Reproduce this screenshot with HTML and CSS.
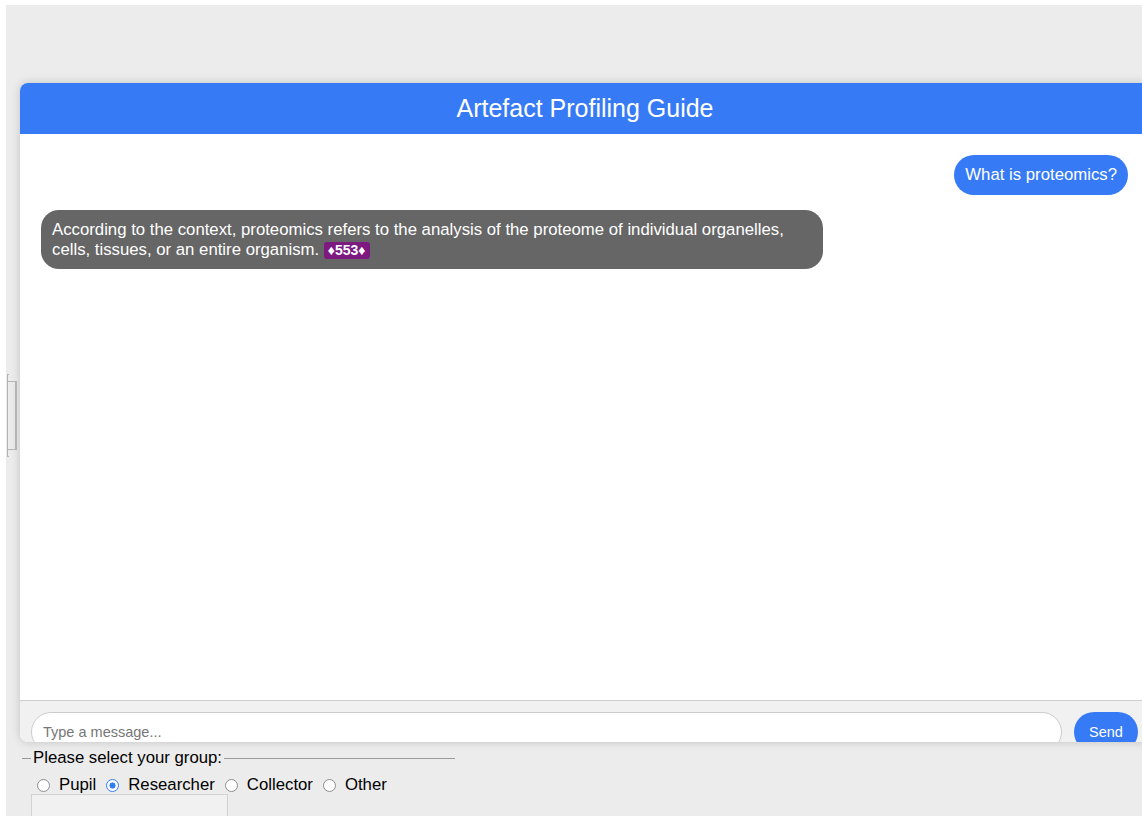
FILE: index.html
```html
<!DOCTYPE html>
<html lang="en">
<head>
<meta charset="utf-8">
<title>Artefact Profiling Guide</title>
<link rel="stylesheet" href="styles.css">
</head>
<body>
<div class="page">
  <div class="side-handle" aria-hidden="true"><span></span></div>

  <section class="chat">
    <header class="chat-header">Artefact Profiling Guide</header>

    <div class="messages">
      <div class="bubble user">What is proteomics?</div>
      <div class="bubble bot">According to the context, proteomics refers to the analysis of the proteome of individual organelles, cells, tissues, or an entire organism. <span class="ref">♦553♦</span></div>
    </div>

    <form class="composer">
      <input class="composer-input" type="text" placeholder="Type a message...">
      <button class="send" type="button">Send</button>
    </form>
  </section>

  <fieldset class="group">
    <legend>Please select your group:</legend>
    <div class="options">
      <label class="opt"><input type="radio" name="group" value="pupil"> Pupil</label>
      <label class="opt"><input type="radio" name="group" value="researcher" checked> Researcher</label>
      <label class="opt"><input type="radio" name="group" value="collector"> Collector</label>
      <label class="opt"><input type="radio" name="group" value="other"> Other</label>
    </div>
    <input class="other-text" type="text">
  </fieldset>
</div>
</body>
</html>
```

FILE: styles.css
```css
html, body {
  margin: 0;
  height: 100%;
  overflow: hidden;
}

body {
  background: #ffffff;
  padding: 5px 0 0 6px;
  box-sizing: border-box;
  font-family: "Liberation Sans", Arial, Helvetica, sans-serif;
  color: #000;
}

.page {
  position: relative;
  background: #ececec;
  height: 811px;
  padding-top: 78px;
  box-sizing: border-box;
  overflow: hidden;
}

/* thin collapsed panel sitting on the left edge */
.side-handle {
  position: absolute;
  left: 1px;
  top: 369px;
  width: 10px;
  height: 83px;
  border-left: 1px solid #b4b4b4;
  box-sizing: border-box;
}
.side-handle::before,
.side-handle::after {
  content: "";
  position: absolute;
  left: -1px;
  width: 2px;
  height: 1px;
  background: #b4b4b4;
}
.side-handle::before { top: 0; }
.side-handle::after { bottom: 0; }
.side-handle span {
  position: absolute;
  left: 0;
  top: 7px;
  width: 9px;
  height: 69px;
  border: 1px solid #b4b4b4;
  border-left: none;
  border-right-width: 2px;
  box-sizing: border-box;
}

/* chat window */
.chat {
  margin-left: 14px;
  width: 1130px;
  height: 659px;
  background: #fff;
  border-radius: 8px;
  overflow: hidden;
  box-shadow: 0 0 10px rgba(0, 0, 0, 0.18);
  display: flex;
  flex-direction: column;
}

.chat-header {
  height: 51px;
  flex: none;
  background: #367bf5;
  color: #fff;
  font-size: 25px;
  line-height: 51px;
  text-align: center;
}

.messages {
  flex: none;
  height: 566px;
  display: flex;
  flex-direction: column;
  gap: 15px;
  padding: 21px 22px 20px 21px;
  box-sizing: border-box;
}

.bubble {
  font-size: 16.75px;
  color: #fff;
  box-sizing: border-box;
}

.bubble.user {
  align-self: flex-end;
  background: #367bf5;
  border-radius: 20px;
  padding: 10px 11px;
  line-height: 20px;
}

.bubble.bot {
  align-self: flex-start;
  width: 782px;
  background: #666666;
  border-radius: 18px;
  padding: 10px 30px 10px 11px;
  line-height: 19.5px;
}

.ref {
  display: inline-block;
  background: #7d1a80;
  color: #fff;
  font-weight: bold;
  font-size: 14px;
  line-height: 17px;
  padding: 0 4px;
  border-radius: 3px;
  vertical-align: 0;
}

/* message composer (taller than the visible strip; the window clips it) */
.composer {
  flex: none;
  margin: 0;
  border-top: 1px solid #cfcfcf;
  background: #f1f1f1;
  display: flex;
  align-items: flex-start;
  gap: 12px;
  padding: 11px 12px 11px 11px;
}

.composer-input {
  flex: 1;
  height: 40px;
  box-sizing: border-box;
  border: 1px solid #cccccc;
  border-radius: 20px;
  padding: 0 11px;
  margin: 0;
  font-family: inherit;
  font-size: 14.5px;
  background: #fff;
  outline: none;
}
.composer-input::placeholder {
  color: #767676;
}

.send {
  flex: none;
  width: 64px;
  height: 40px;
  border: none;
  border-radius: 20px;
  background: #367bf5;
  color: #fff;
  font-family: inherit;
  font-size: 14.5px;
  padding: 0;
  margin: 0;
}

/* group selector */
.group {
  margin: 6px 0 0 16px;
  width: 433px;
  box-sizing: border-box;
  border: none;
  border-top: 1px solid #9a9a9a;
  padding: 0 0 0 9px;
}

.group legend {
  font-size: 16.75px;
  line-height: 20px;
  padding: 0 2px;
}

.options {
  display: flex;
  align-items: center;
  height: 18px;
  margin-top: 8px;
  font-size: 16.75px;
}

.opt {
  display: inline-flex;
  align-items: center;
  gap: 9px;
  margin-right: 10px;
}

.opt input {
  appearance: none;
  -webkit-appearance: none;
  width: 13px;
  height: 13px;
  margin: 0 0 0 6px;
  border: 1px solid #8d8d8d;
  border-radius: 50%;
  background: #fff;
  box-sizing: border-box;
}
.opt + .opt input { margin-left: 0; }

.opt input:checked {
  border: 1px solid #2f7ff0;
  background: radial-gradient(circle, #2f7ff0 0 2.8px, #fff 3.3px);
}

.other-text {
  display: block;
  margin: 0;
  width: 197px;
  height: 24px;
  box-sizing: border-box;
  border: 1px solid #d2d2d2;
  background: #f1f1f1;
  padding: 0;
}
```
